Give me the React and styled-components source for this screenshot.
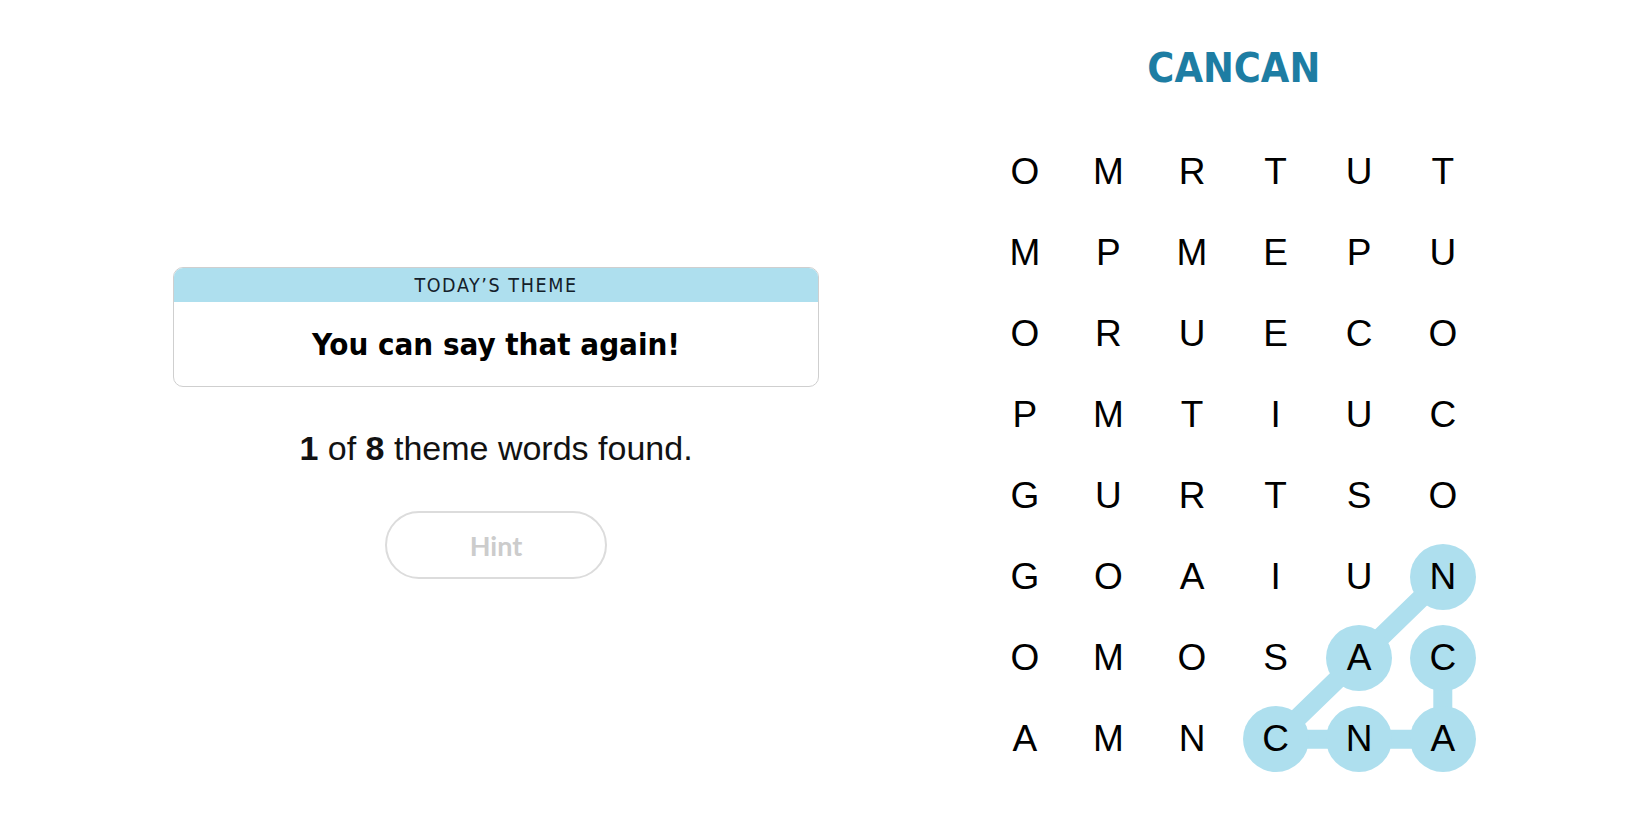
import React from 'react'
import styled, { createGlobalStyle } from 'styled-components'

const GlobalStyle = createGlobalStyle`
  body {
    margin: 0;
    background: #fff;
    font-family: "Liberation Sans", Arial, sans-serif;
    color: #121212;
  }
`;

const BOARD = [
  'OMRTUT',
  'MPMEPU',
  'ORUECO',
  'PMTIUC',
  'GURTSO',
  'GOAIUN',
  'OMOSAC',
  'AMNCNA',
];

// the word being traced, in order (row, col)
const PATH = [
  [6, 5],
  [7, 5],
  [7, 4],
  [7, 3],
  [6, 4],
  [5, 5],
];

const CELL_W = 83.6;
const CELL_H = 81.1;

const Page = styled.div`
  display: flex;
  flex-direction: row;
  width: 1650px;
  height: 825px;
`;

const LeftPane = styled.div`
  flex: 0 0 983px;
  box-sizing: border-box;
  padding: 267px 0 0 9px;
  display: flex;
  flex-direction: column;
  align-items: center;
`;

const ThemeCard = styled.div`
  width: 646px;
  box-sizing: border-box;
  border: 1px solid #cfcfcf;
  border-radius: 10px;
  overflow: hidden;
`;

const ThemeHeader = styled.div`
  height: 34px;
  background: #aedfee;
  display: flex;
  align-items: center;
  justify-content: center;
  font-family: "DejaVu Sans Condensed", "Liberation Sans", sans-serif;
  font-size: 19.5px;
  letter-spacing: 1.6px;
  text-transform: uppercase;
  color: #14202a;
`;

const ThemeBody = styled.div`
  height: 84px;
  display: flex;
  align-items: center;
  justify-content: center;
  font-family: "DejaVu Sans Condensed", "Liberation Sans", sans-serif;
  font-size: 31px;
  font-weight: bold;
  color: #000;
`;

const FoundText = styled.p`
  margin: 41px 0 0;
  font-size: 34px;
  line-height: 40px;
  color: #121212;

  b {
    font-weight: bold;
  }
`;

const HintButton = styled.button`
  margin-top: 43px;
  width: 222px;
  height: 68px;
  border: 2px solid #dcdcdc;
  border-radius: 34px;
  background: #fff;
  font-family: Lato, "Liberation Sans", sans-serif;
  font-weight: bold;
  font-size: 27px;
  color: #cccccc;
`;

const RightPane = styled.div`
  flex: 0 0 ${CELL_W * 6}px;
  display: flex;
  flex-direction: column;
  align-items: center;
  padding-top: 43px;
`;

const Title = styled.h1`
  margin: 0;
  height: 50px;
  line-height: 50px;
  font-family: "DejaVu Sans Condensed", "Liberation Sans", sans-serif;
  font-size: 41px;
  font-weight: bold;
  color: #1d7da3;
`;

const Board = styled.div`
  position: relative;
  margin-top: 38px;
  display: grid;
  grid-template-columns: repeat(6, ${CELL_W}px);
  grid-template-rows: repeat(8, ${CELL_H}px);
`;

const Connectors = styled.svg`
  position: absolute;
  inset: 0;
  width: 100%;
  height: 100%;
  pointer-events: none;
`;

const Cell = styled.div`
  position: relative;
  display: flex;
  align-items: center;
  justify-content: center;
  font-size: 37px;
  color: #000;
`;

const Letter = styled.span`
  width: 66px;
  height: 66px;
  border-radius: 50%;
  display: flex;
  align-items: center;
  justify-content: center;
  background: ${(p) => (p.$selected ? '#aedfee' : 'transparent')};
`;

const center = ([r, c]) => [c * CELL_W + CELL_W / 2, r * CELL_H + CELL_H / 2];

function App() {
  const selected = new Set(PATH.map(([r, c]) => `${r}-${c}`));
  const points = PATH.map(center).map(([x, y]) => `${x},${y}`).join(' ');

  return (
    <Page>
      <GlobalStyle />
      <LeftPane>
        <ThemeCard>
          <ThemeHeader>Today’s Theme</ThemeHeader>
          <ThemeBody>You can say that again!</ThemeBody>
        </ThemeCard>
        <FoundText>
          <b>1</b> of <b>8</b> theme words found.
        </FoundText>
        <HintButton>Hint</HintButton>
      </LeftPane>
      <RightPane>
        <Title>CANCAN</Title>
        <Board>
          <Connectors>
            <polyline
              points={points}
              fill="none"
              stroke="#aedfee"
              strokeWidth="19"
              strokeLinejoin="round"
              strokeLinecap="round"
            />
          </Connectors>
          {BOARD.map((row, r) =>
            row.split('').map((ch, c) => (
              <Cell key={`${r}-${c}`}>
                <Letter $selected={selected.has(`${r}-${c}`)}>{ch}</Letter>
              </Cell>
            ))
          )}
        </Board>
      </RightPane>
    </Page>
  );
}

export default App
